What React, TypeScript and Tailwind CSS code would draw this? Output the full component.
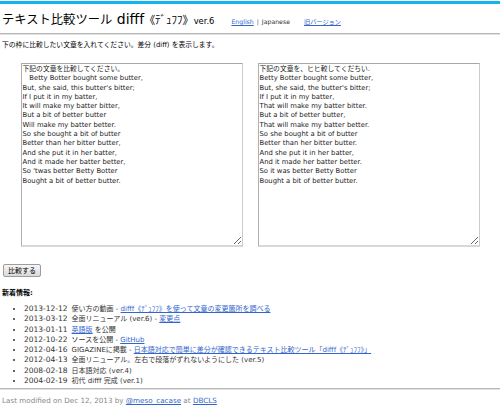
import React from 'react';

const LEFT_TEXT = `下記の文章を比較してください。
　Betty Botter bought some butter,
But, she said, this butter's bitter;
If I put it in my batter,
It will make my batter bitter,
But a bit of better butter
Will make my batter better.
So she bought a bit of butter
Better than her bitter butter,
And she put it in her batter,
And it made her batter better,
So 'twas better Betty Botter
Bought a bit of better butter.`;

const RIGHT_TEXT = `下記の文章を、ヒヒ較してくだちい.
Betty Botter bought some butter,
But, she said, the butter's bitter;
If I put it in my batter,
That will make my batter bitter.
But a bit of better butter,
That will make my batter better.
So she bought a bit of butter
Better than her bitter butter.
And she put it in her batter,
And it made her batter better.
So it was better Betty Botter
Bought a bit of better butter.`;

const font = "font-['DejaVu_Sans','Noto_Sans_CJK_JP',sans-serif]";

function Link({ children }: { children: React.ReactNode }) {
  return <a className="text-[#3366cc] underline">{children}</a>;
}

const news: { date: string; body: React.ReactNode }[] = [
  {
    date: '2013-12-12',
    body: (
      <>
        使い方の動画 - <Link>difff《ﾃﾞｭﾌﾌ》を使って文章の変更箇所を調べる</Link>
      </>
    ),
  },
  {
    date: '2013-03-12',
    body: (
      <>
        全面リニューアル (ver.6) - <Link>変更点</Link>
      </>
    ),
  },
  {
    date: '2013-01-11',
    body: (
      <>
        <Link>英語版</Link> を公開
      </>
    ),
  },
  {
    date: '2012-10-22',
    body: (
      <>
        ソースを公開 - <Link>GitHub</Link>
      </>
    ),
  },
  {
    date: '2012-04-16',
    body: (
      <>
        GIGAZINEに掲載 - <Link>日本語対応で簡単に差分が確認できるテキスト比較ツール「difff《ﾃﾞｭﾌﾌ》」</Link>
      </>
    ),
  },
  { date: '2012-04-13', body: <>全面リニューアル。左右で段落がずれないようにした (ver.5)</> },
  { date: '2008-02-18', body: <>日本語対応 (ver.4)</> },
  { date: '2004-02-19', body: <>初代 difff 完成 (ver.1)</> },
];

function Box({ text }: { text: string }) {
  return (
    <textarea
      defaultValue={text}
      spellCheck={false}
      className={`h-[184px] w-[222px] overflow-hidden border border-t-[#a8a8a8] border-l-[#b0b0b0] border-r-[#cccccc] border-b-2 border-b-[#d8d8d8] bg-white px-[1px] py-[1px] text-[6.8px] leading-[9.3px] text-[#222] outline-none ${font}`}
    />
  );
}

export default function App() {
  return (
    <div className={`h-[406px] w-[500px] overflow-hidden bg-white text-black ${font}`}>
      <div className="mt-[1px] h-[3px] bg-[#12b4f2]" />

      <div className="flex items-baseline px-[2px] pt-[5px]">
        <h1 className="font-normal leading-[20px] whitespace-nowrap">
          <span className="text-[12.3px]">テキスト比較ツール</span>
          <span className="text-[14px]"> difff</span>
          <span className="text-[11px]">《ﾃﾞｭﾌﾌ》</span>
          <span className="text-[8.4px]">ver.6</span>
        </h1>
        <div className="ml-[17px] flex items-baseline text-[6.2px]">
          <Link>English</Link>
          <span className="mx-[3px] text-[#555]">|</span>
          <span className="text-[#333]">Japanese</span>
          <span className="ml-[14px]">
            <Link>旧バージョン</Link>
          </span>
        </div>
      </div>

      <div className="mt-[2px] h-[2px] border-t border-[#b8b8b8] bg-[#e0e0e0]" />

      <p className="mt-[5px] px-[2px] text-[6.8px] leading-[10px]">下の枠に比較したい文章を入れてください。差分 (diff) を表示します。</p>

      <div className="mt-[13px] flex justify-center gap-[15px]">
        <Box text={LEFT_TEXT} />
        <Box text={RIGHT_TEXT} />
      </div>

      <div className="mt-[17px] flex px-[3px]">
        <button className="h-[13px] rounded-[2px] border border-[#9c9c9c] bg-[linear-gradient(#f6f6f6,#dadada)] px-[4px] text-[7px] leading-[10px] text-black">
          比較する
        </button>
      </div>

      <div className="mt-[11px] px-[2px] text-[7px] font-bold leading-[10px]">新着情報:</div>

      <ul className="mt-[6px] ml-[24px] list-disc text-[7px] leading-[10.3px] text-[#333]">
        {news.map((n) => (
          <li key={n.date}>
            <span className="mr-[4px] text-[7.5px]">{n.date}</span>
            {n.body}
          </li>
        ))}
      </ul>

      <div className="mt-[2px] h-[2px] border-t border-[#b8b8b8] bg-[#e0e0e0]" />

      <p className="mt-[6px] px-[2px] text-[7.2px] leading-[10px] text-[#888]">
        Last modified on Dec 12, 2013 by <Link>@meso_cacase</Link> at <Link>DBCLS</Link>
      </p>
    </div>
  );
}
